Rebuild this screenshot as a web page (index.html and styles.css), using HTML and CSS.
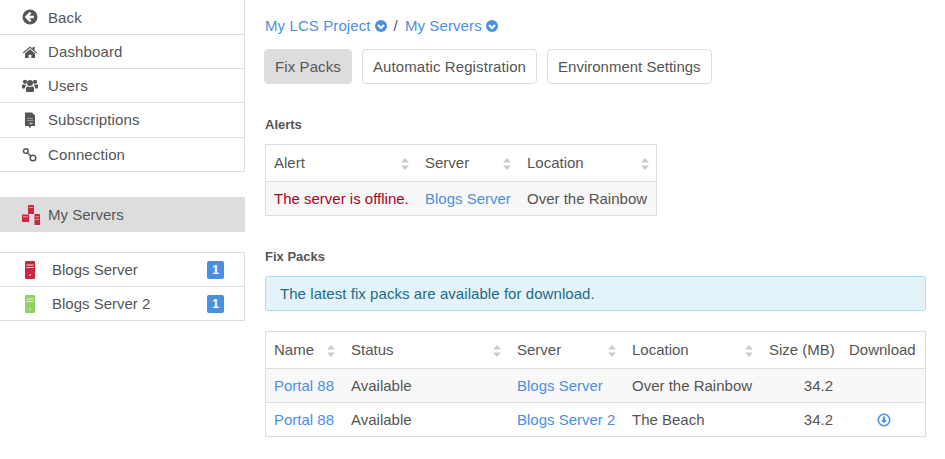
FILE: index.html
```html
<!DOCTYPE html>
<html lang="en">
<head>
    <meta charset="UTF-8">
    <title>My Servers</title>
    <link rel="stylesheet" href="styles.css">
</head>
<body>
    <svg class="defs" width="0" height="0">
        <symbol id="server" viewBox="0 0 10 18">
            <path fill="currentColor" d="M1 0h8a1 1 0 0 1 1 1v16a1 1 0 0 1-1 1H1a1 1 0 0 1-1-1V1a1 1 0 0 1 1-1z"/>
            <path fill="#fff" fill-opacity=".8" d="M1.5 3.5h7v1h-7zM1.5 6h7v1h-7zM4 13.5h2v1H4z"/>
        </symbol>
        <symbol id="sort" viewBox="0 0 8 12">
            <path fill="#ccc" d="M4 0l4 4.6H0zM4 12L0 7.4h8z"/>
        </symbol>
        <symbol id="chevron" viewBox="0 0 12 12">
            <circle cx="6" cy="6" r="6" fill="#4a90e2"/>
            <path fill="none" stroke="#fff" stroke-width="2" d="M3 5l3 3 3-3"/>
        </symbol>
    </svg>

    <aside class="sidebar">
        <ul class="nav">
            <li>
                <svg class="nav-icon" viewBox="0 0 16 16"><circle cx="8" cy="8" r="7.500" fill="#555"/><path fill="none" stroke="#fff" stroke-width="2.400" d="M8.600 3.600L4.400 8l4.200 4.400M4.800 8h7"/></svg>
                Back
            </li>
            <li>
                <svg class="nav-icon" viewBox="0 0 16 16"><path fill="#555" d="M8 2.500L.8 8.600l.7.8L8 4l6.500 5.400.7-.8-2.600-2.200V3h-2v1.700z"/><path fill="#555" d="M8 5.200L3 9.400V14h3.600v-3.200h2.800V14H13V9.400z"/></svg>
                Dashboard
            </li>
            <li>
                <svg class="nav-icon" viewBox="0 0 16 16"><circle cx="8" cy="5" r="3" fill="#555"/><circle cx="3" cy="3.800" r="2.100" fill="#555"/><circle cx="13" cy="3.800" r="2.100" fill="#555"/><path fill="#555" d="M4.200 9.500C4.400 8.700 5 8.400 6 8.600c1.300.6 2.700.6 4 0 1-.2 1.600.1 1.800.9.3 1.100.4 2.200.3 3.500-.1.6-.5 1-1.200 1H5.100c-.7 0-1.100-.4-1.200-1-.1-1.300 0-2.400.3-3.500z"/><path fill="#555" d="M0 7.500c0-.8.6-1.200 1.400-1 1 .4 2 .4 3 .2-.1.500-.5.900-.9 1.300-.4.600-.6 1.500-.7 2.500H1c-.6 0-1-.3-1-1zM16 7.500c0-.8-.6-1.200-1.400-1-1 .4-2 .4-3 .2.1.500.5.900.9 1.300.4.600.6 1.500.7 2.500H15c.6 0 1-.3 1-1z"/></svg>
                Users
            </li>
            <li>
                <svg class="nav-icon" viewBox="0 0 16 16"><path fill="#555" d="M3 .5h7l3 3v10.500H9v1.500H7V14H3z"/><path fill="#fff" fill-opacity=".55" d="M5 6h6v.8H5zM5 8h6v.8H5zM7.500 10.500h3v2h-3z"/></svg>
                Subscriptions
            </li>
            <li>
                <svg class="nav-icon" viewBox="0 0 16 16"><g fill="none" stroke="#555" stroke-width="1.500"><circle cx="3.800" cy="4" r="2.300"/><circle cx="11" cy="11" r="2.800"/><path d="M5.500 5.700l3.500 3.500"/></g></svg>
                Connection
            </li>
        </ul>

        <div class="my-servers">
            <svg class="group-icon" viewBox="0 0 18 20"><g fill="#c9283e"><rect x="6" y="0" width="6" height="9" rx=".6"/><rect x="0" y="9.500" width="7" height="7.500" rx=".6"/><rect x="12.500" y="9" width="5.500" height="11" rx=".6"/></g><path fill="#fff" fill-opacity=".7" d="M7 2h4v.7H7zM1 11.500h5v.7H1zM13.500 11.500h3.500v.7h-3.500zM13.500 14h3.500v.7h-3.500z"/></svg>
            My Servers
        </div>

        <ul class="server-list">
            <li>
                <svg class="server-icon red"><use href="#server"/></svg>
                <span class="server-name">Blogs Server</span>
                <span class="badge">1</span>
            </li>
            <li>
                <svg class="server-icon green"><use href="#server"/></svg>
                <span class="server-name">Blogs Server 2</span>
                <span class="badge">1</span>
            </li>
        </ul>
    </aside>

    <main class="content">
        <div class="breadcrumb">
            <a>My LCS Project</a>
            <svg class="chevron"><use href="#chevron"/></svg>
            <span class="sep">/</span>
            <a>My Servers</a>
            <svg class="chevron"><use href="#chevron"/></svg>
        </div>

        <div class="tabs">
            <span class="tab active">Fix Packs</span>
            <span class="tab">Automatic Registration</span>
            <span class="tab">Environment Settings</span>
        </div>

        <h2 class="heading alerts-heading">Alerts</h2>
        <table class="grid alerts-table">
            <thead>
                <tr>
                    <th class="a1"><div class="th-in">Alert<svg class="sort"><use href="#sort"/></svg></div></th>
                    <th class="a2"><div class="th-in">Server<svg class="sort"><use href="#sort"/></svg></div></th>
                    <th class="a3"><div class="th-in">Location<svg class="sort"><use href="#sort"/></svg></div></th>
                </tr>
            </thead>
            <tbody>
                <tr>
                    <td class="danger">The server is offline.</td>
                    <td><a>Blogs Server</a></td>
                    <td>Over the Rainbow</td>
                </tr>
            </tbody>
        </table>

        <h2 class="heading packs-heading">Fix Packs</h2>
        <div class="notice">The latest fix packs are available for download.</div>

        <table class="grid packs-table">
            <thead>
                <tr>
                    <th class="p1"><div class="th-in">Name<svg class="sort"><use href="#sort"/></svg></div></th>
                    <th class="p2"><div class="th-in">Status<svg class="sort"><use href="#sort"/></svg></div></th>
                    <th class="p3"><div class="th-in">Server<svg class="sort"><use href="#sort"/></svg></div></th>
                    <th class="p4"><div class="th-in">Location<svg class="sort"><use href="#sort"/></svg></div></th>
                    <th class="p5 num">Size (MB)</th>
                    <th class="p6">Download</th>
                </tr>
            </thead>
            <tbody>
                <tr>
                    <td><a>Portal 88</a></td>
                    <td>Available</td>
                    <td><a>Blogs Server</a></td>
                    <td>Over the Rainbow</td>
                    <td class="num">34.2</td>
                    <td class="center"></td>
                </tr>
                <tr>
                    <td><a>Portal 88</a></td>
                    <td>Available</td>
                    <td><a>Blogs Server 2</a></td>
                    <td>The Beach</td>
                    <td class="num">34.2</td>
                    <td class="center">
                        <svg class="download" viewBox="0 0 14 14"><circle cx="7" cy="7" r="5.700" fill="none" stroke="#4a90e2" stroke-width="1.600"/><path fill="#4a90e2" d="M5.900 3.500h2.200v3.500h1.900L7 10.300 4 7h1.900z"/></svg>
                    </td>
                </tr>
            </tbody>
        </table>
    </main>
</body>
</html>
```

FILE: styles.css
```css
*{
    margin:0;padding:0;box-sizing:border-box;
}
body{
    width:945px;
    height:459px;
    overflow:hidden;
    background-color:#fff;
    color:#555;
    font-family:"Liberation Sans",Arial,sans-serif;
    font-size:15px;
    display:flex;
}
a{
    color:#4a90e2;
}
ul{
    list-style:none;
}
.defs{
    position:absolute;
}

/* sidebar */
.sidebar{
    width:245px;
    flex:none;
}
.nav{
    border-right:1px solid #ddd;
    border-bottom:1px solid #ddd;
    letter-spacing:.12px;
}
.nav li{
    height:34px;
    padding-left:22px;
    display:flex;
    align-items:center;
    border-bottom:1px solid #ddd;
}
.nav li:first-child{
    height:35px;
}
.nav li:nth-child(4){
    height:35px;
    padding-bottom:1px;
}
.nav li:last-child{
    height:33px;
    border-bottom:0;
}
.nav-icon{
    width:16px;
    height:16px;
    margin-right:10px;
    flex:none;
}
.group-icon{
    width:18px;
    height:20px;
    margin-right:8px;
    flex:none;
}
.my-servers{
    margin-top:25px;
    height:35px;
    padding-left:22px;
    display:flex;
    align-items:center;
    background-color:#ddd;
}
.server-list{
    margin-top:20px;
    border:1px solid #ddd;
    border-left:0;
}
.server-list li{
    height:33px;
    padding:0 20px 0 25px;
    display:flex;
    align-items:center;
}
.server-list li+li{
    height:34px;
    border-top:1px solid #ddd;
}
.server-icon{
    width:10px;
    height:18px;
    flex:none;
}
.server-icon.red{
    color:#c9283e;
}
.server-icon.green{
    color:#8fd068;
}
.server-name{
    margin-left:17px;
    flex:1;
}
.badge{
    width:17px;
    height:18px;
    border-radius:2px;
    background-color:#4a90e2;
    color:#fff;
    font-size:12px;
    font-weight:bold;
    line-height:18px;
    text-align:center;
}

/* main column */
.content{
    flex:1;
    padding:0 19px 0 20px;
}
.breadcrumb{
    margin-top:16px;
    height:18px;
    display:flex;
    align-items:center;
    letter-spacing:.1px;
}
.chevron{
    width:12px;
    height:12px;
    margin:1px 0 0 4px;
}
.sep{
    margin:0 7px;
}
.tabs{
    margin-top:15px;
    margin-left:-1px;
    display:flex;
    gap:10px;
}
.tab{
    height:35px;
    padding:0 10px;
    line-height:33px;
    letter-spacing:.1px;
    border:1px solid #ddd;
    border-radius:4px;
}
.tab:last-child{
    letter-spacing:0;
}
.tab.active{
    background-color:#ddd;
}
.heading{
    font-size:13px;
    font-weight:bold;
    line-height:16px;
}
.alerts-heading{
    margin-top:33px;
}
.packs-heading{
    margin-top:33px;
}
.grid{
    border-collapse:separate;
    border-spacing:0;
    table-layout:fixed;
    border:1px solid #ddd;
}
.grid th{
    height:37px;
    padding:0 7px 2px 9px;
    font-weight:normal;
    text-align:left;
    white-space:nowrap;
    border-bottom:1px solid #ddd;
}
.grid td{
    height:33px;
    padding:0 7px 0 9px;
    white-space:nowrap;
}
.grid th:first-child,
.grid td:first-child{
    padding-left:8px;
}
.grid tbody tr+tr td{
    height:34px;
    border-top:1px solid #ddd;
}
.grid tbody tr:first-child td{
    background-color:#f8f8f8;
}
.th-in{
    display:flex;
    align-items:center;
    justify-content:space-between;
}
.sort{
    width:8px;
    height:12px;
    margin-top:3px;
}
.alerts-table{
    margin-top:11px;
    width:392px;
}
.a1{width:150px;}
.a2{width:102px;}
.a3{width:138px;}
.danger{
    color:#b0001e;
}
.notice{
    margin-top:11px;
    height:35px;
    padding-left:14px;
    line-height:33px;
    letter-spacing:.06px;
    color:#1d6a85;
    background-color:#e4f3fa;
    border:1px solid #a3e3f8;
    border-radius:2px;
}
.packs-table{
    margin-top:20px;
    width:661px;
}
.p1{width:76px;}
.p2{width:166px;}
.p3{width:115px;}
.p4{width:137px;}
.p5{width:80px;}
.p6{width:85px;}
.center{
    text-align:center;
}
.grid .num{
    text-align:right;
}
.download{
    width:14px;
    height:14px;
    display:block;
    margin:0 auto;
}
```
